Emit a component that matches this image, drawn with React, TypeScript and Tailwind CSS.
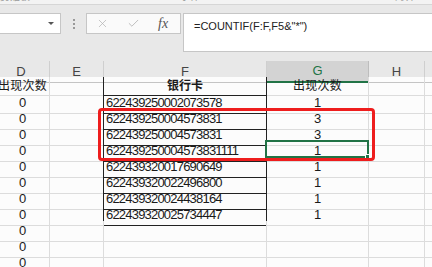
import React from 'react';
import { X, Check } from 'lucide-react';

// spreadsheet rows below the column header
const rows = [
  { d: '出现次数', f: '银行卡', g: '出现次数', head: true },
  { d: '0', f: '622439250002073578', g: '1' },
  { d: '0', f: '622439250004573831', g: '3' },
  { d: '0', f: '622439250004573831', g: '3' },
  { d: '0', f: '622439250004573831111', g: '1' },
  { d: '0', f: '622439320017690649', g: '1' },
  { d: '0', f: '622439320022496800', g: '1' },
  { d: '0', f: '622439320024438164', g: '1' },
  { d: '0', f: '622439320025734447', g: '1' },
  { d: '0' },
  { d: '0' },
  { d: '0' },
];

const cols = ['D', 'E', 'F', 'G', 'H', ''];

const App: React.FC = () => {
  return (
    <div className="relative w-[432px] h-[267px] overflow-hidden bg-[#e8e8e8] font-['Liberation_Sans','Noto_Sans_CJK_SC',sans-serif] text-[#1a1a1a]">
      {/* ribbon bottom edge, group labels mostly scrolled away */}
      <div className="h-[5px] overflow-hidden bg-[#f3f3f3] border-b border-[#d6d6d6] text-[10px] text-[#999] leading-none">
        <div className="flex -mt-[8px] whitespace-nowrap">
          <span className="w-[70px]">剪贴板</span>
          <span className="w-[110px] text-[#555]">▪</span>
          <span className="w-[115px]">字体</span>
          <span className="w-[100px]">▪</span>
          <span>对齐</span>
        </div>
      </div>

      {/* formula bar */}
      <div className="flex items-start pt-[8px] h-[56px]">
        <div className="-ml-px w-[62px] h-[21px] bg-white border border-[#c6c6c6] flex items-center justify-end pr-[6px]">
          <span className="w-0 h-0 border-l-[3px] border-r-[3px] border-t-[3px] border-l-transparent border-r-transparent border-t-[#555]" />
        </div>
        <div className="w-[25px] h-[21px] flex flex-col items-center justify-center gap-[2px]">
          <span className="w-[2px] h-[2px] bg-[#999]" />
          <span className="w-[2px] h-[2px] bg-[#999]" />
          <span className="w-[2px] h-[2px] bg-[#999]" />
        </div>
        <div className="w-[95px] h-[21px] bg-[#fafafa] border border-[#c6c6c6] flex items-center">
          <X className="ml-[9px] w-[13px] h-[13px] text-[#b0b0b0]" strokeWidth={1.3} />
          <Check className="ml-[18px] w-[13px] h-[13px] text-[#b0b0b0]" strokeWidth={1.5} />
          <span className="ml-[18px] font-['Liberation_Serif'] italic text-[14px] text-[#555]">fx</span>
        </div>
        <div className="ml-[2px] flex-1 h-[39px] bg-white border border-[#c6c6c6] border-r-0 pl-[10px] pt-[4px] text-[11px] text-[#222]">
          =COUNTIF(F:F,F5&amp;"*")
        </div>
      </div>

      {/* column headers */}
      <div className="-ml-[7px] w-[446px] grid grid-cols-[57px_54px_163px_102px_56px_1fr] h-4">
        {cols.map((c) =>
          c === 'G' ? (
            <div key={c} className="flex items-center justify-center bg-[#d3d3d3] border-r border-[#bdbdbd] border-b-2 border-b-[#217346] text-[13px] text-[#217346]">
              {c}
            </div>
          ) : (
            <div key={c || 'x'} className="flex items-center justify-center border-r border-[#cfcfcf] border-b border-b-[#c4c4c4] text-[13px] text-[#444]">
              {c}
            </div>
          )
        )}
      </div>

      {/* cells */}
      <div className="-ml-[7px] w-[446px] bg-[#fcfcfc]">
        {rows.map((r, i) => {
          const boxed = i < 9;
          return (
            <div key={i} className="grid grid-cols-[57px_54px_163px_102px_56px_1fr] h-4 text-[13px]">
              <div className="flex items-center justify-center border-r border-b border-[#dcdcdc] pl-[3px]">
                {r.head ? <span className="text-[12px] tracking-[0.3px]">{r.d}</span> : r.d}
              </div>
              <div className={`border-b border-[#dcdcdc] border-r ${boxed ? 'border-r-[#222]' : ''}`} />
              <div
                className={`flex items-center border-r border-b ${boxed ? 'border-[#222]' : 'border-[#dcdcdc]'} ${
                  r.head ? 'justify-center font-bold text-[12px]' : 'pl-[2px] tracking-[-0.8px]'
                }`}
              >
                {r.f}
              </div>
              <div className="flex items-center justify-center border-r border-b border-[#dcdcdc]">
                {r.head ? <span className="text-[12px] tracking-[0.3px]">{r.g}</span> : r.g}
              </div>
              <div className="border-r border-b border-[#dcdcdc]" />
              <div className="border-b border-[#dcdcdc]" />
            </div>
          );
        })}
      </div>

      {/* active cell G5 */}
      <div className="absolute left-[265px] top-[140px] w-[104px] h-[18px] border-2 border-[#217346]">
        <span className="absolute -right-[3px] -bottom-[3px] w-[5px] h-[5px] bg-[#217346] border border-white" />
      </div>

      {/* red highlight */}
      <div className="absolute left-[98px] top-[108px] w-[277px] h-[53px] border-[3px] border-[#ee1d1d] rounded-[4px]" />
    </div>
  );
};

export default App;
